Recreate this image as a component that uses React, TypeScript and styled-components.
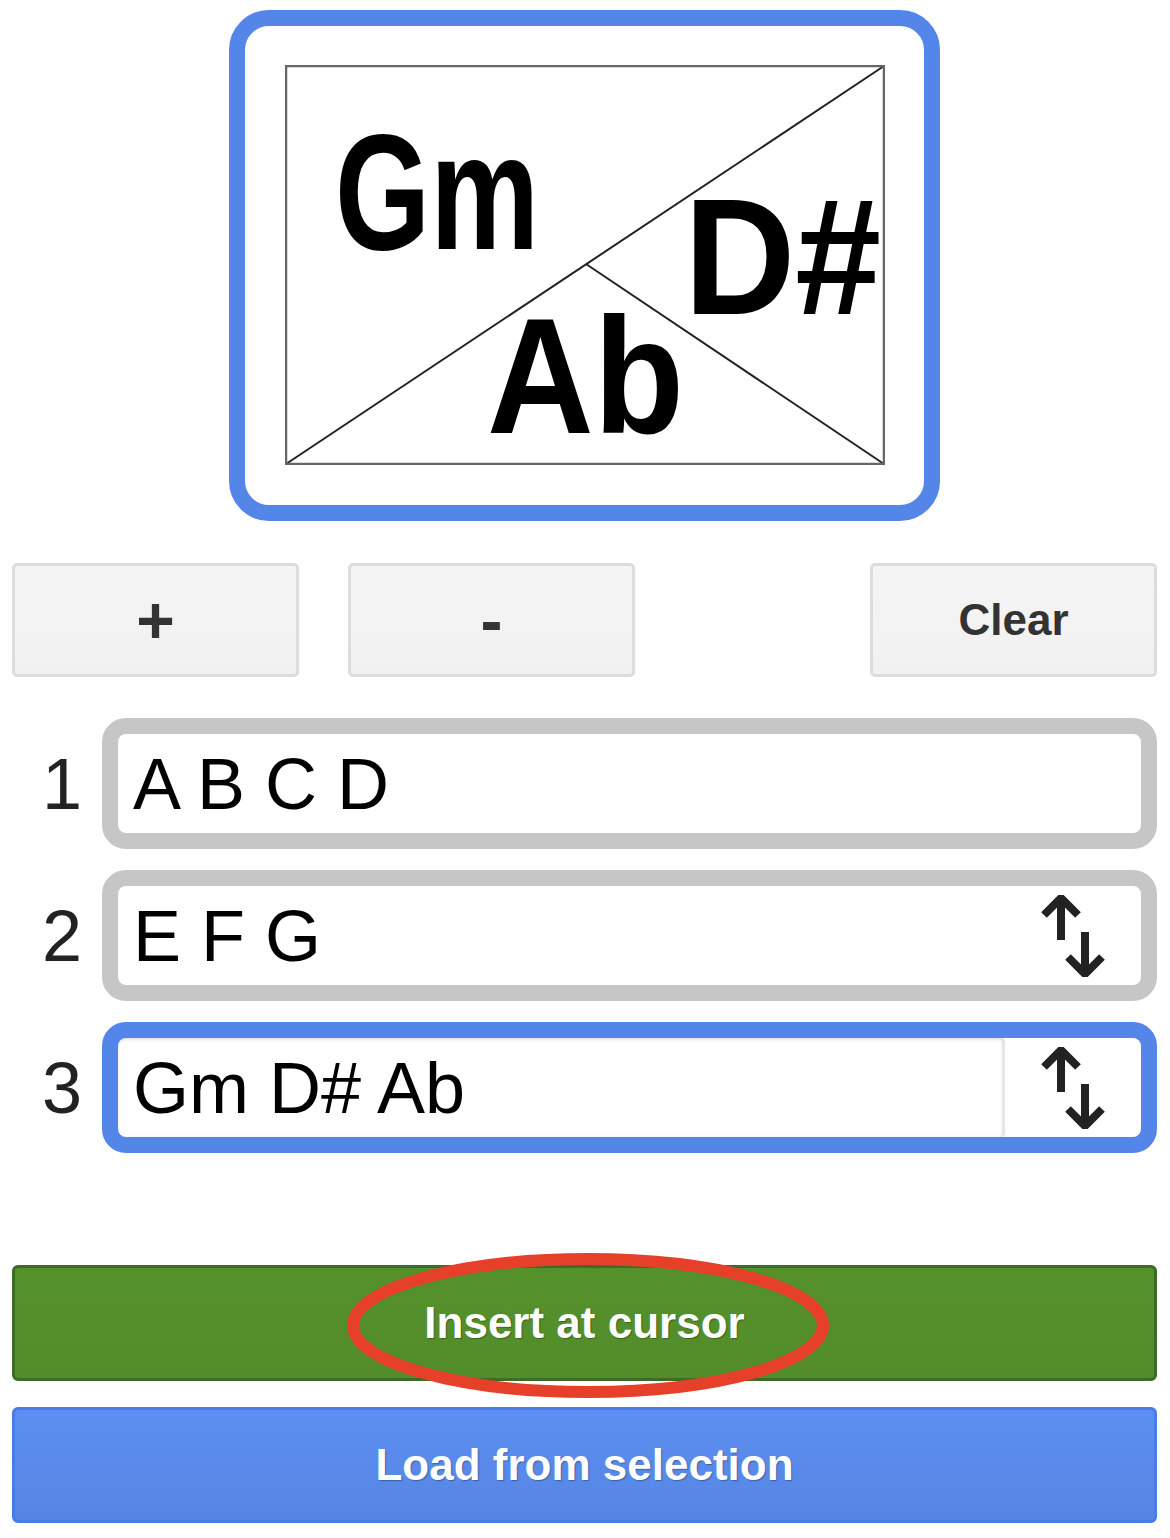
import React from "react";
import styled, { createGlobalStyle } from "styled-components";

const Global = createGlobalStyle`
  html, body { margin: 0; padding: 0; background: #ffffff; }
  body { font-family: "Liberation Sans", Arial, sans-serif; }
`;

const Page = styled.div`
  width: 1170px;
  box-sizing: border-box;
  padding: 10px 13px 0 12px;
  display: flex;
  flex-direction: column;
`;

const PreviewFrame = styled.div`
  align-self: center;
  box-sizing: border-box;
  width: 711px;
  height: 511px;
  border: 16px solid #5486ea;
  border-radius: 40px;
  padding: 39px 39px 40px 40px;
  background: #ffffff;
  display: flex;
`;

const ButtonRow = styled.div`
  margin-top: 42px;
  display: flex;
  gap: 49px;
`;

const GrayButton = styled.button<{ $push?: boolean; $big?: boolean }>`
  width: 287px;
  height: 114px;
  box-sizing: border-box;
  margin-left: ${(p) => (p.$push ? "auto" : "0")};
  border: 3px solid #dcdcdc;
  border-radius: 5px;
  background: linear-gradient(#f4f4f4, #f1f1f1);
  color: #333333;
  font-family: "Liberation Sans", Arial, sans-serif;
  font-weight: bold;
  font-size: ${(p) => (p.$big ? "66px" : "44px")};
  line-height: 1;
  padding: 0;
  display: flex;
  align-items: center;
  justify-content: center;
`;

const Rows = styled.div`
  margin-top: 41px;
  display: flex;
  flex-direction: column;
  gap: 21px;
`;

const Row = styled.div`
  display: flex;
  align-items: center;
  gap: 20px;
`;

const Num = styled.div`
  width: 70px;
  text-align: right;
  font-family: "Liberation Sans", Arial, sans-serif;
  font-size: 72px;
  line-height: 1;
  color: #222222;
`;

const Field = styled.div<{ $active?: boolean }>`
  flex: 1;
  height: 131px;
  box-sizing: border-box;
  border: 16px solid ${(p) => (p.$active ? "#5486ea" : "#c6c6c6")};
  border-radius: 24px;
  background: #ffffff;
  display: flex;
  align-items: stretch;
  overflow: hidden;
`;

const FieldInput = styled.div<{ $focused?: boolean }>`
  flex: 1;
  display: flex;
  align-items: center;
  padding-left: 15px;
  font-family: "Liberation Sans", Arial, sans-serif;
  font-size: 72px;
  line-height: 1;
  color: #000000;
  border-radius: ${(p) => (p.$focused ? "8px 4px 4px 8px" : "0")};
  box-shadow: ${(p) =>
    p.$focused
      ? "inset 0 2px 3px rgba(0,0,0,0.08), inset -2px 0 3px rgba(0,0,0,0.10)"
      : "none"};
  border-right: ${(p) => (p.$focused ? "1px solid #e6e6e6" : "none")};
`;

const IconSlot = styled.div`
  width: 136px;
  display: flex;
  align-items: center;
  justify-content: center;
`;

const Actions = styled.div`
  margin-top: 112px;
  display: flex;
  flex-direction: column;
  gap: 26px;
`;

const InsertWrap = styled.div`
  position: relative;
`;

const ActionButton = styled.button<{ $tone: "green" | "blue" }>`
  width: 100%;
  height: 116px;
  box-sizing: border-box;
  border: 3px solid ${(p) => (p.$tone === "green" ? "#3c6c26" : "#4a7be6")};
  border-radius: 6px;
  background: ${(p) =>
    p.$tone === "green"
      ? "linear-gradient(#55912b, #528d29)"
      : "linear-gradient(#5c8ff1, #5685e4)"};
  color: #ffffff;
  font-family: "Liberation Sans", Arial, sans-serif;
  font-weight: bold;
  font-size: 44px;
  text-shadow: 1px 1px 1px rgba(0, 0, 0, 0.3);
  padding: 0;
  display: flex;
  align-items: center;
  justify-content: center;
`;

const Annotation = styled.svg`
  position: absolute;
  left: 335px;
  top: -12px;
  width: 482px;
  height: 145px;
  pointer-events: none;
  overflow: visible;
`;

const ChordText = styled.text`
  font-family: "Liberation Sans", Arial, sans-serif;
  font-weight: bold;
  font-size: 166px;
  fill: #000000;
`;

function ChordDiagram() {
  return (
    <svg width="600" height="400" viewBox="0 0 600 400">
      <ChordText x="50" y="184" textLength="204" lengthAdjust="spacingAndGlyphs">
        Gm
      </ChordText>
      <ChordText x="399" y="249" textLength="197" lengthAdjust="spacingAndGlyphs">
        D#
      </ChordText>
      <ChordText x="202" y="368" textLength="197" lengthAdjust="spacingAndGlyphs">
        Ab
      </ChordText>
      <line x1="1" y1="399" x2="599" y2="1" stroke="#222" strokeWidth="2" />
      <line x1="301" y1="199" x2="599" y2="399" stroke="#222" strokeWidth="2" />
      <rect x="1" y="1" width="598" height="398" fill="none" stroke="#666" strokeWidth="2.5" />
    </svg>
  );
}

function SortIcon() {
  return (
    <svg width="66" height="82" viewBox="0 0 66 82">
      <g fill="none" stroke="#222222" strokeWidth="8" strokeLinejoin="miter" strokeLinecap="butt">
        <path d="M21 5 V45" />
        <path d="M4 20 L21 3 L38 20" />
        <path d="M45 37 V77" />
        <path d="M28 62 L45 79 L62 62" />
      </g>
    </svg>
  );
}

const rows = [
  { n: "1", text: "A B C D", icon: false, active: false },
  { n: "2", text: "E F G", icon: true, active: false },
  { n: "3", text: "Gm D# Ab", icon: true, active: true },
];

export default function App() {
  return (
    <>
      <Global />
      <Page>
        <PreviewFrame>
          <ChordDiagram />
        </PreviewFrame>
        <ButtonRow>
          <GrayButton $big>+</GrayButton>
          <GrayButton $big>-</GrayButton>
          <GrayButton $push>Clear</GrayButton>
        </ButtonRow>
        <Rows>
          {rows.map((r) => (
            <Row key={r.n}>
              <Num>{r.n}</Num>
              <Field $active={r.active}>
                <FieldInput $focused={r.active}>{r.text}</FieldInput>
                {r.icon && (
                  <IconSlot>
                    <SortIcon />
                  </IconSlot>
                )}
              </Field>
            </Row>
          ))}
        </Rows>
        <Actions>
          <InsertWrap>
            <ActionButton $tone="green">Insert at cursor</ActionButton>
            <Annotation viewBox="0 0 482 145">
              <ellipse cx="241" cy="72.5" rx="235" ry="66.5" fill="none" stroke="#e6402a" strokeWidth="12" />
            </Annotation>
          </InsertWrap>
          <ActionButton $tone="blue">Load from selection</ActionButton>
        </Actions>
      </Page>
    </>
  );
}
